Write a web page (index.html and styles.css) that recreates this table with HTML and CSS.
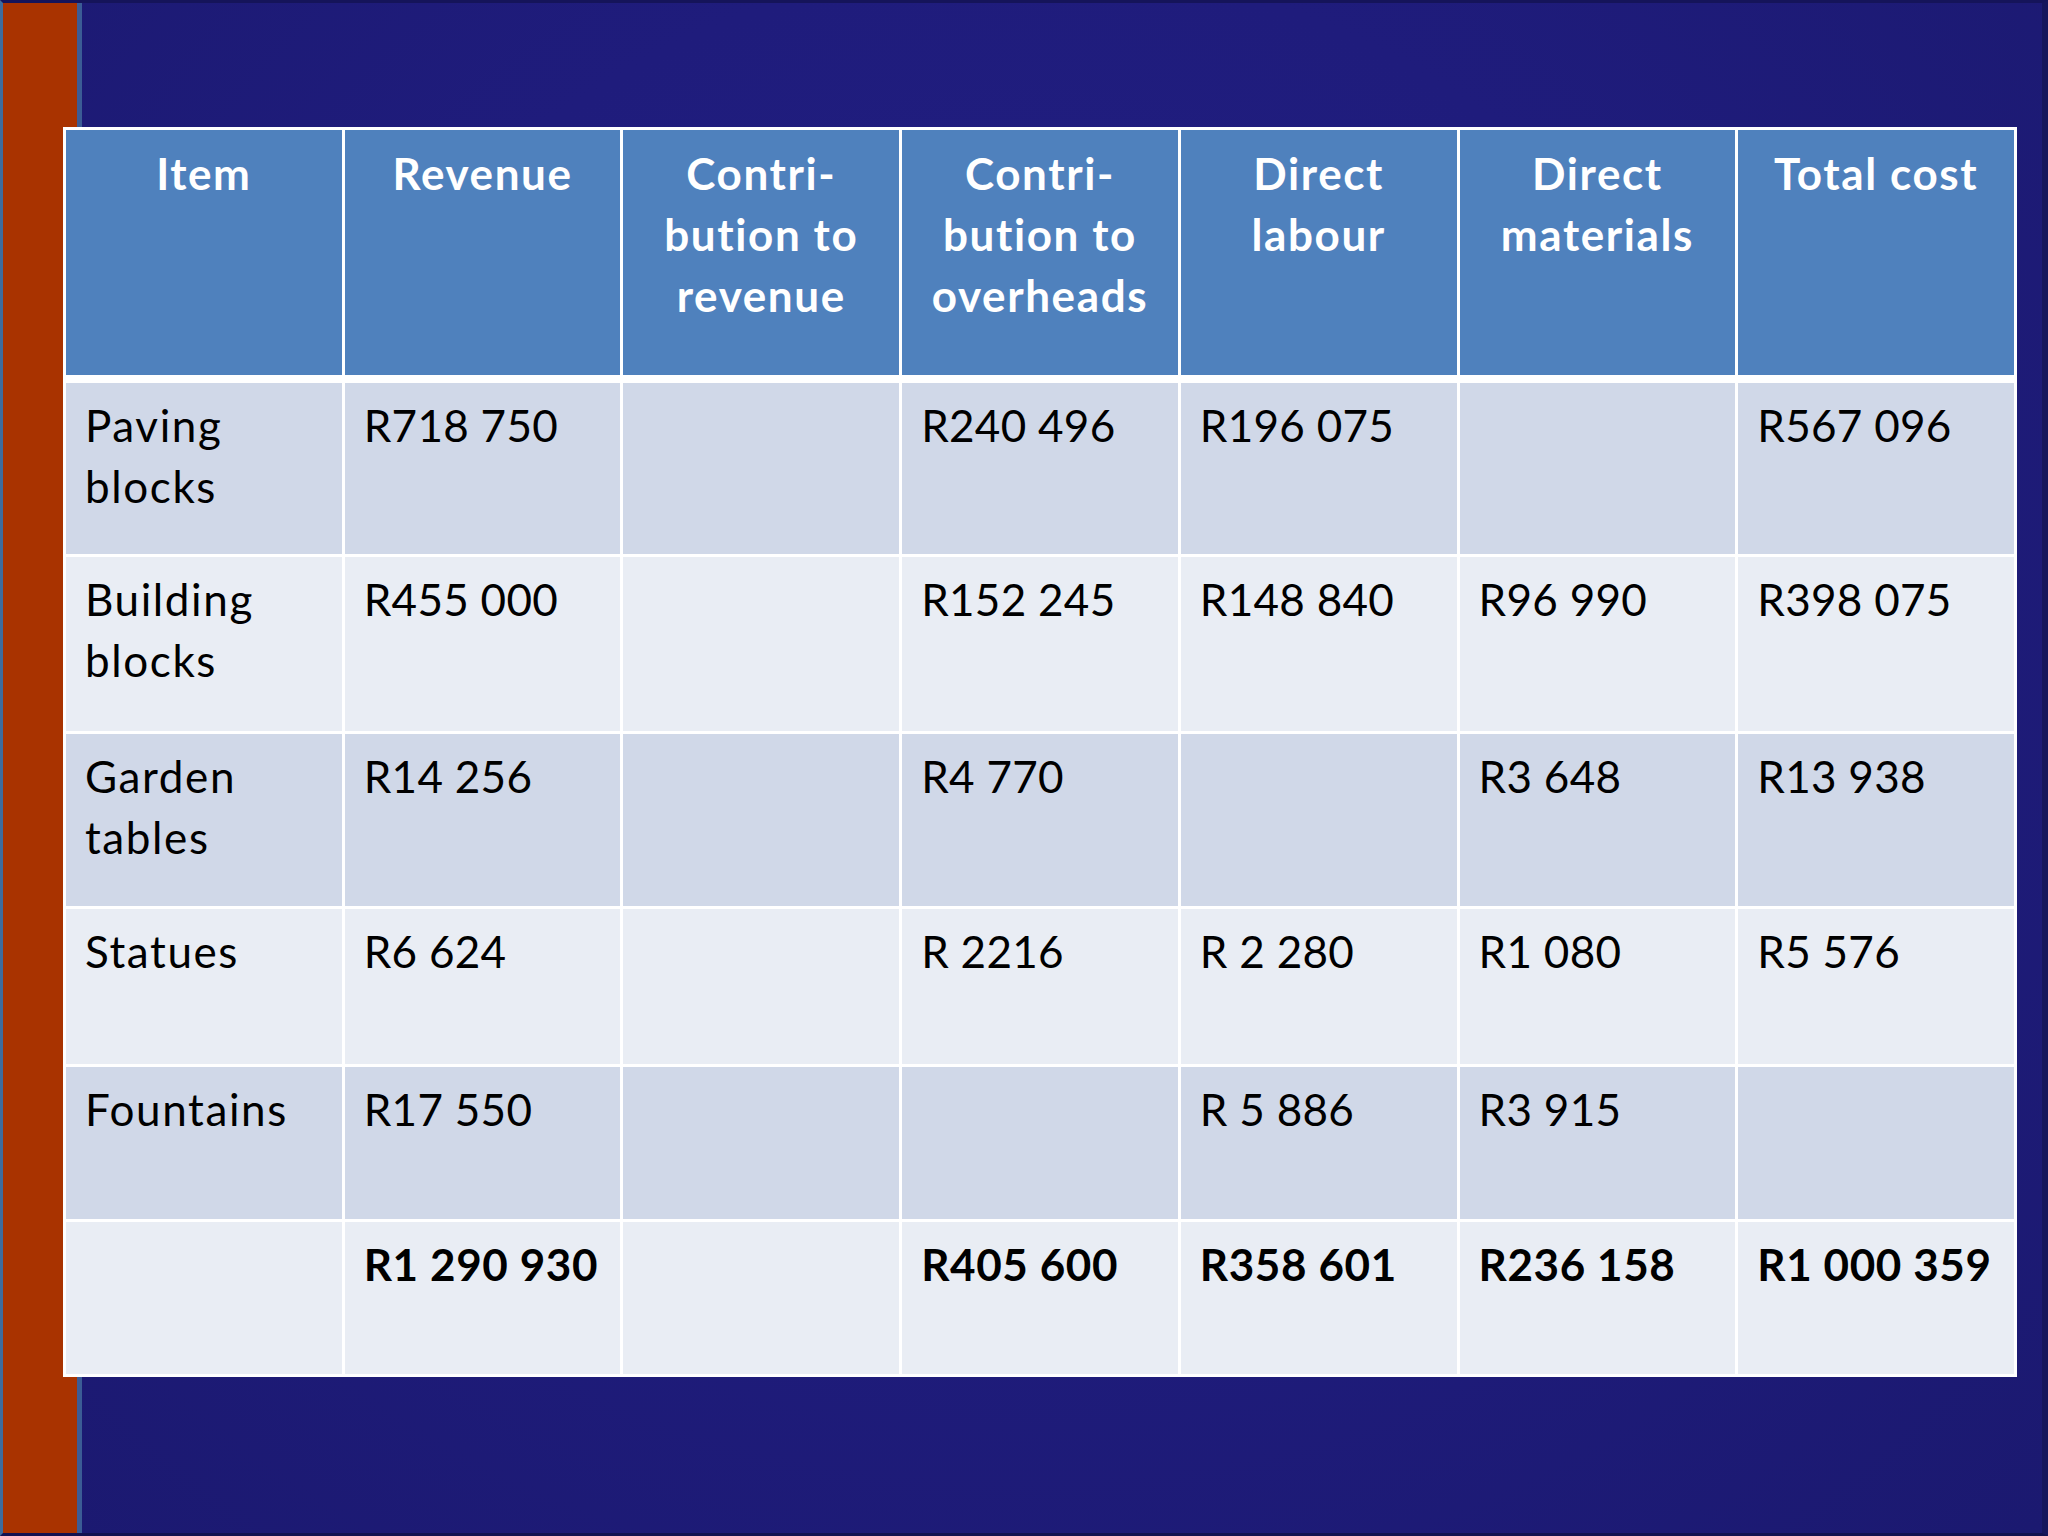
FILE: index.html
```html
<!DOCTYPE html>
<html lang="en">
<head>
<meta charset="utf-8">
<title>Product costs</title>
<link rel="stylesheet" href="styles.css">
</head>
<body>
<div class="slide">
  <div class="table" role="table">
    <div class="th" role="columnheader">Item</div>
    <div class="th" role="columnheader">Revenue</div>
    <div class="th" role="columnheader">Contri-<br>bution to<br>revenue</div>
    <div class="th" role="columnheader">Contri-<br>bution to<br>overheads</div>
    <div class="th" role="columnheader">Direct<br>labour</div>
    <div class="th" role="columnheader">Direct<br>materials</div>
    <div class="th" role="columnheader">Total cost</div>

    <div class="td band1 item">Paving<br>blocks</div>
    <div class="td band1">R718 750</div>
    <div class="td band1"></div>
    <div class="td band1">R240 496</div>
    <div class="td band1">R196 075</div>
    <div class="td band1"></div>
    <div class="td band1">R567 096</div>

    <div class="td band2 item">Building<br>blocks</div>
    <div class="td band2">R455 000</div>
    <div class="td band2"></div>
    <div class="td band2">R152 245</div>
    <div class="td band2">R148 840</div>
    <div class="td band2">R96 990</div>
    <div class="td band2">R398 075</div>

    <div class="td band1 item">Garden<br>tables</div>
    <div class="td band1">R14 256</div>
    <div class="td band1"></div>
    <div class="td band1">R4 770</div>
    <div class="td band1"></div>
    <div class="td band1">R3 648</div>
    <div class="td band1">R13 938</div>

    <div class="td band2 item">Statues</div>
    <div class="td band2">R6 624</div>
    <div class="td band2"></div>
    <div class="td band2">R 2216</div>
    <div class="td band2">R 2 280</div>
    <div class="td band2">R1 080</div>
    <div class="td band2">R5 576</div>

    <div class="td band1 item">Fountains</div>
    <div class="td band1">R17 550</div>
    <div class="td band1"></div>
    <div class="td band1"></div>
    <div class="td band1">R 5 886</div>
    <div class="td band1">R3 915</div>
    <div class="td band1"></div>

    <div class="td band2 total"></div>
    <div class="td band2 total">R1 290 930</div>
    <div class="td band2 total"></div>
    <div class="td band2 total">R405 600</div>
    <div class="td band2 total">R358 601</div>
    <div class="td band2 total">R236 158</div>
    <div class="td band2 total">R1 000 359</div>
  </div>
</div>
</body>
</html>
```
FILE: styles.css
```css
html, body {
  margin: 0;
  padding: 0;
}

body {
  width: 2048px;
  height: 1536px;
  overflow: hidden;
  background: #1c1a74;
}

.slide {
  box-sizing: border-box;
  width: 2048px;
  height: 1536px;
  border-top: 3px solid #15145a;
  border-left: 3px solid #3f6c9c;
  border-bottom: 3px solid #121250;
  border-right: 6px solid #16165c;
  padding: 124px 0 0 60px;
  background:
    linear-gradient(to right, #a93300 0, #a93300 74px, #3b5c95 74px, #3b5c95 79px, transparent 79px),
    radial-gradient(ellipse at 50% 40%, #221f84 0%, #1f1c7c 50%, #1b1970 100%);
  font-family: Lato, "Open Sans", sans-serif;
}

.table {
  display: grid;
  grid-template-columns: repeat(7, 1fr);
  grid-template-rows: 250px 171px 174px 172px 155px 152px 152px;
  gap: 3px;
  padding: 3px;
  width: 1954px;
  box-sizing: border-box;
  background: #ffffff;
}

.th {
  margin-bottom: 5px;
  background: #4f81bd;
  color: #ffffff;
  font-weight: 700;
  font-size: 44px;
  line-height: 61px;
  letter-spacing: 1.6px;
  text-align: center;
  padding: 13px 4px 0;
  white-space: nowrap;
}

.td {
  font-size: 44px;
  line-height: 61px;
  letter-spacing: 0.3px;
  color: #000000;
  padding: 12px 4px 0 19px;
  white-space: nowrap;
}

.item {
  letter-spacing: 1.6px;
}

.band1 {
  background: #d0d8e8;
}

.band2 {
  background: #e9edf4;
}

.total {
  font-weight: 700;
  letter-spacing: 0.6px;
}
```
